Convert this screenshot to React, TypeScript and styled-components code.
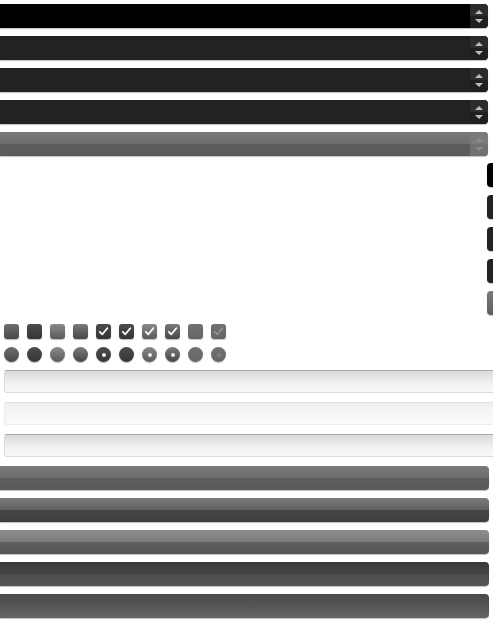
import React from "react";
import styled, { createGlobalStyle, css } from "styled-components";

const Global = createGlobalStyle`
  html, body {
    margin: 0;
    padding: 0;
    background: #fff;
    overflow: hidden;
    font-family: "Liberation Sans", Arial, sans-serif;
  }
`;

const Page = styled.div`
  width: 493px;
  height: 625px;
  overflow: hidden;
  display: flex;
  flex-direction: column;
`;

const Stack = styled.div<{ $top: number }>`
  display: flex;
  flex-direction: column;
  gap: 8px;
  margin-top: ${(p) => p.$top}px;
`;

type Tone = "black" | "dark" | "disabled";

const toneBg = (t: Tone) =>
  t === "black"
    ? "#000"
    : t === "dark"
    ? "#222"
    : "linear-gradient(#7a7a7a 0%, #6e6e6e 50%, #5c5c5c 51%, #5a5a5a 100%)";

const Spinner = styled.div`
  display: flex;
  width: 488px;
  height: 24px;
  border-radius: 0 4px 4px 0;
  box-shadow: 0 1px 1px #c4c4c4;
`;

const SpinField = styled.div<{ $tone: Tone }>`
  flex: 1;
  background: ${(p) => toneBg(p.$tone)};
`;

const SpinButton = styled.div<{ $tone: Tone }>`
  width: 18px;
  display: flex;
  flex-direction: column;
  border-radius: 0 4px 4px 0;
  overflow: hidden;
  background: ${(p) => (p.$tone === "disabled" ? "#5e5e5e" : "#262626")};
  opacity: ${(p) => (p.$tone === "disabled" ? 0.85 : 1)};
`;

const SpinHalf = styled.div<{ $up?: boolean; $tone: Tone }>`
  flex: 1;
  display: flex;
  align-items: center;
  justify-content: center;
  background: ${(p) =>
    p.$tone === "disabled"
      ? p.$up
        ? "#636363"
        : "#595959"
      : p.$up
      ? "#2c2c2c"
      : "#1f1f1f"};
  &::after {
    content: "";
    width: 0;
    height: 0;
    border-left: 4px solid transparent;
    border-right: 4px solid transparent;
    ${(p) =>
      p.$up
        ? css`
            border-bottom: 4px solid ${p.$tone === "disabled" ? "#777" : "#bdbdbd"};
            margin-top: 3px;
          `
        : css`
            border-top: 4px solid ${p.$tone === "disabled" ? "#777" : "#bdbdbd"};
            margin-bottom: 3px;
          `}
  }
`;

const Tab = styled.div<{ $tone: Tone }>`
  margin-left: 487px;
  width: 20px;
  height: 24px;
  border-radius: 4px 0 0 4px;
  background: ${(p) =>
    p.$tone === "disabled" ? "linear-gradient(#7a7a7a, #5e5e5e)" : toneBg(p.$tone)};
  box-shadow: 0 1px 1px #c4c4c4;
`;

const ControlRow = styled.div<{ $top: number }>`
  display: flex;
  gap: 8px;
  padding-left: 4px;
  margin-top: ${(p) => p.$top}px;
`;

type State = "normal" | "hover" | "active" | "focus" | "disabled";

const stateBg: Record<State, string> = {
  normal: "linear-gradient(#6e6e6e, #4a4a4a)",
  hover: "linear-gradient(#4c4c4c, #353535)",
  active: "linear-gradient(#8a8a8a, #5a5a5a)",
  focus: "linear-gradient(#7a7a7a, #474747)",
  disabled: "linear-gradient(#626262, #555)",
};

const Box = styled.div<{ $state: State; $round?: boolean }>`
  width: 15px;
  height: 15px;
  border-radius: ${(p) => (p.$round ? "50%" : "3px")};
  background: ${(p) => stateBg[p.$state]};
  box-shadow: 0 1px 1px #bbb;
  display: flex;
  align-items: center;
  justify-content: center;
  opacity: ${(p) => (p.$state === "disabled" ? 0.9 : 1)};
`;

const Dot = styled.div<{ $dim?: boolean }>`
  width: 4px;
  height: 4px;
  border-radius: 50%;
  background: ${(p) => (p.$dim ? "#777" : "#eee")};
`;

const Check = ({ dim }: { dim?: boolean }) => (
  <svg width="11" height="11" viewBox="0 0 11 11">
    <path
      d="M1.8 5.8 L4.3 8.3 L9.3 2.2"
      fill="none"
      stroke={dim ? "#888" : "#fff"}
      strokeWidth="1.8"
      strokeLinecap="round"
      strokeLinejoin="round"
    />
  </svg>
);

const TextStack = styled.div<{ $top: number }>`
  display: flex;
  flex-direction: column;
  gap: 9px;
  margin-top: ${(p) => p.$top}px;
  padding-left: 4px;
`;

const TextInput = styled.div<{ $disabled?: boolean }>`
  width: 520px;
  height: 23px;
  box-sizing: border-box;
  border-radius: 3px;
  border: 1px solid ${(p) => (p.$disabled ? "#ececec" : "#dcdcdc")};
  border-top-color: ${(p) => (p.$disabled ? "#e0e0e0" : "#a8a8a8")};
  background: ${(p) =>
    p.$disabled
      ? "linear-gradient(#f0f0f0, #fafafa)"
      : "linear-gradient(#dadada, #f2f2f2 60%, #f8f8f8)"};
`;

type Btn = "normal" | "hover" | "light" | "active" | "focus";

const btnBg: Record<Btn, string> = {
  normal: "linear-gradient(#7a7a7a 0%, #6c6c6c 50%, #5e5e5e 51%, #5a5a5a 100%)",
  hover: "linear-gradient(#7c7c7c 0%, #5e5e5e 50%, #454545 51%, #3e3e3e 100%)",
  light: "linear-gradient(#8e8e8e 0%, #7c7c7c 50%, #606060 51%, #555 100%)",
  active: "linear-gradient(#383838 0%, #444 50%, #4c4c4c 51%, #555 100%)",
  focus: "linear-gradient(#4a4a4a 0%, #555 50%, #666 100%)",
};

const Button = styled.div<{ $kind: Btn }>`
  width: 489px;
  height: 24px;
  border-radius: 0 4px 4px 0;
  background: ${(p) => btnBg[p.$kind]};
  box-shadow: 0 1px 1px #c0c0c0;
`;

const tones: Tone[] = ["black", "dark", "dark", "dark", "disabled"];
const boxes: { state: State; checked?: boolean }[] = [
  { state: "normal" },
  { state: "hover" },
  { state: "active" },
  { state: "focus" },
  { state: "hover", checked: true },
  { state: "hover", checked: true },
  { state: "active", checked: true },
  { state: "focus", checked: true },
  { state: "disabled" },
  { state: "disabled", checked: true },
];
const radios: { state: State; checked?: boolean }[] = [
  { state: "normal" },
  { state: "hover" },
  { state: "active" },
  { state: "focus" },
  { state: "hover", checked: true },
  { state: "hover" },
  { state: "active", checked: true },
  { state: "focus", checked: true },
  { state: "disabled" },
  { state: "disabled", checked: true },
];
const buttons: Btn[] = ["normal", "hover", "light", "active", "focus"];

export default function App() {
  return (
    <Page>
      <Global />
      <Stack $top={4}>
        {tones.map((t, i) => (
          <Spinner key={i}>
            <SpinField $tone={t} />
            <SpinButton $tone={t}>
              <SpinHalf $up $tone={t} />
              <SpinHalf $tone={t} />
            </SpinButton>
          </Spinner>
        ))}
      </Stack>
      <Stack $top={7}>
        {tones.map((t, i) => (
          <Tab key={i} $tone={t} />
        ))}
      </Stack>
      <ControlRow $top={9}>
        {boxes.map((b, i) => (
          <Box key={i} $state={b.state}>
            {b.checked && <Check dim={b.state === "disabled"} />}
          </Box>
        ))}
      </ControlRow>
      <ControlRow $top={8}>
        {radios.map((b, i) => (
          <Box key={i} $state={b.state} $round>
            {b.checked && <Dot $dim={b.state === "disabled"} />}
          </Box>
        ))}
      </ControlRow>
      <TextStack $top={8}>
        <TextInput />
        <TextInput $disabled />
        <TextInput />
      </TextStack>
      <Stack $top={9}>
        {buttons.map((b, i) => (
          <Button key={i} $kind={b} />
        ))}
      </Stack>
    </Page>
  );
}
